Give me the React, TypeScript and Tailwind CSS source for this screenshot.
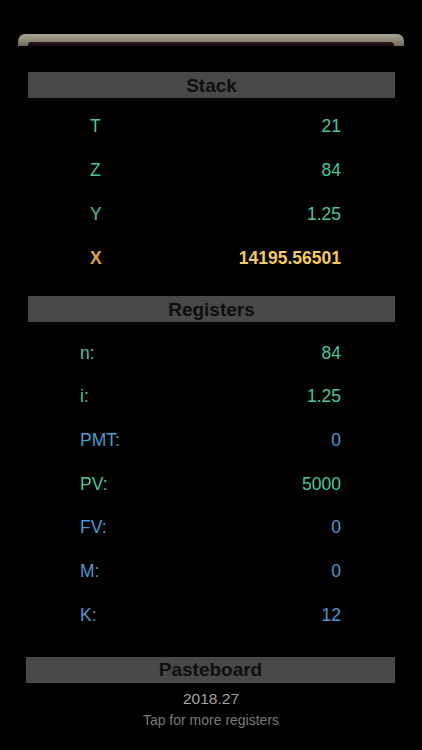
const stack = [
  { label: "T", value: "21" },
  { label: "Z", value: "84" },
  { label: "Y", value: "1.25" },
];

const registers = [
  { label: "n:", value: "84", tone: "green" },
  { label: "i:", value: "1.25", tone: "green" },
  { label: "PMT:", value: "0", tone: "blue" },
  { label: "PV:", value: "5000", tone: "green" },
  { label: "FV:", value: "0", tone: "blue" },
  { label: "M:", value: "0", tone: "blue" },
  { label: "K:", value: "12", tone: "blue" },
];

function Header({ title, wide }: { title: string; wide?: boolean }) {
  return (
    <div
      className={`h-[26px] bg-[#484848] flex items-center justify-center text-[19px] font-bold text-[#0f0f0f] leading-none ${
        wide ? "ml-[26px] mr-[27px]" : "ml-[28px] mr-[27px]"
      }`}
    >
      {title}
    </div>
  );
}

export default function App() {
  return (
    <div
      className="w-[422px] h-[750px] bg-black overflow-hidden"
      style={{ fontFamily: '"Liberation Sans", Arial, sans-serif' }}
    >
      {/* top bezel */}
      <div className="pt-[34px] px-[18px]">
        <div className="h-[12px] rounded-t-[7px] bg-gradient-to-b from-[#aaa592] via-[#8f8a76] to-[#6f6a58] flex flex-col justify-end px-[10px]">
          <div className="h-[4px] rounded-tl-[4px] rounded-tr-[6px] bg-gradient-to-b from-[#2c191c] to-[#140a0c]" />
        </div>
      </div>

      {/* Stack */}
      <div className="mt-[26px]">
        <Header title="Stack" />
        <div className="mt-[6px] pl-[90px] pr-[81px] text-[17.5px]">
          {stack.map((row) => (
            <div key={row.label} className="h-11 flex items-center justify-between text-[#4cc59b]">
              <span>{row.label}</span>
              <span>{row.value}</span>
            </div>
          ))}
          <div className="h-11 flex items-center justify-between font-bold">
            <span className="text-[#d9a84a]">X</span>
            <span className="text-[#f6c861]">14195.56501</span>
          </div>
        </div>
      </div>

      {/* Registers */}
      <div className="mt-[16px]">
        <Header title="Registers" />
        <div className="mt-[9px] pl-[80px] pr-[81px] text-[17.5px]">
          {registers.map((row) => (
            <div
              key={row.label}
              className={`h-[43.7px] flex items-center justify-between ${
                row.tone === "green" ? "text-[#4cc59b]" : "text-[#4b9bd2]"
              }`}
            >
              <span>{row.label}</span>
              <span>{row.value}</span>
            </div>
          ))}
        </div>
      </div>

      {/* Pasteboard */}
      <div className="mt-[20px]">
        <Header title="Pasteboard" wide />
        <div className="mt-[6px] flex flex-col items-center">
          <div className="h-[20px] flex items-center text-[15.5px] text-[#a3a3a3]">2018.27</div>
          <div className="mt-[2px] h-[20px] flex items-center text-[14px] text-[#7a7a7a]">
            Tap for more registers
          </div>
        </div>
      </div>
    </div>
  );
}
